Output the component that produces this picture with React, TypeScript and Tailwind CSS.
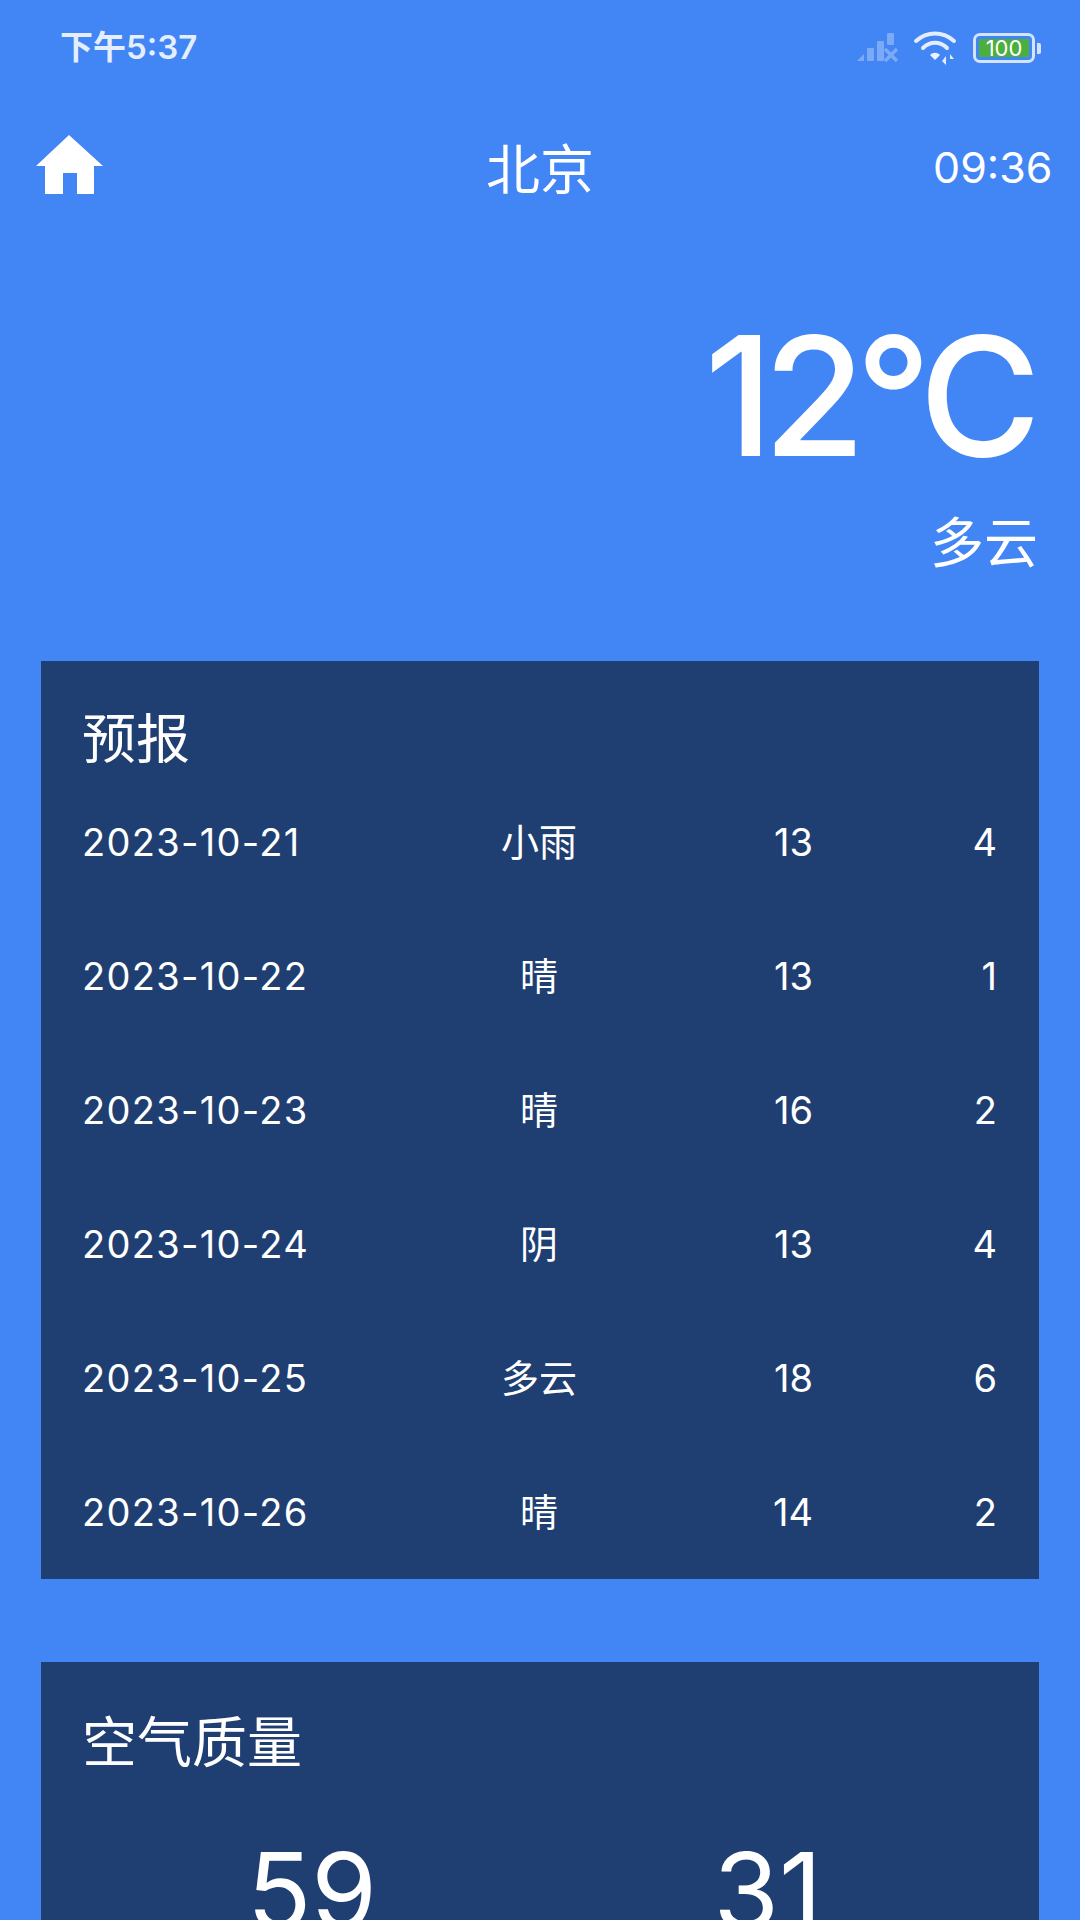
const FONT = "font-['Inter','Noto_Sans_CJK_SC',sans-serif]";

const forecast = [
  { date: "2023-10-21", weather: "小雨", high: 13, low: 4 },
  { date: "2023-10-22", weather: "晴", high: 13, low: 1 },
  { date: "2023-10-23", weather: "晴", high: 16, low: 2 },
  { date: "2023-10-24", weather: "阴", high: 13, low: 4 },
  { date: "2023-10-25", weather: "多云", high: 18, low: 6 },
  { date: "2023-10-26", weather: "晴", high: 14, low: 2 },
];

function HomeIcon() {
  return (
    <svg width="68" height="60" viewBox="0 0 68 60" fill="#fff" className="-mt-[4px]">
      <path d="M34 0 L68 31 H59 V59 H42 V38 H28 V59 H10 V31 H1 Z" />
    </svg>
  );
}

function StatusIcons() {
  return (
    <div className="flex items-center">
      {/* signal, no service */}
      <svg width="44" height="32" viewBox="0 0 44 32" fill="#fff" opacity="0.3">
        <path d="M1 29 L8 22 V29 Z" />
        <rect x="11" y="16" width="7" height="13" rx="1" />
        <rect x="21" y="9" width="7" height="20" rx="1" />
        <rect x="31" y="1" width="7" height="12" rx="1" />
        <path d="M29 17 L41 29 M41 17 L29 29" stroke="#fff" strokeWidth="3.5" />
      </svg>
      {/* wifi */}
      <svg width="46" height="36" viewBox="0 0 46 36" fill="none" className="ml-[13px]">
        <path d="M3 11 C14 1 30 1 41 11" stroke="#fff" strokeOpacity="0.85" strokeWidth="4" strokeLinecap="round" />
        <path d="M10 18 C17 11 27 11 34 18" stroke="#fff" strokeOpacity="0.85" strokeWidth="4" strokeLinecap="round" />
        <path d="M17 25 C20 22 24 22 27 25 L22 30 Z" fill="#fff" fillOpacity="0.9" />
        <path d="M33 26 V35 L29 31 Z M37 24 V34 M37 24 L41 29 H37" fill="#fff" fillOpacity="0.85" />
      </svg>
      {/* battery */}
      <div className="ml-[14px] flex items-center">
        <div className="w-[62px] h-[30px] rounded-[7px] border-[3px] border-[#d3e3fb] flex items-center justify-center p-[3px]">
          <div className="w-full h-full bg-[#4cae3c] flex items-center justify-center text-white text-[22px] leading-none">
            100
          </div>
        </div>
        <div className="ml-[2px] w-[4px] h-[11px] rounded-r-[2px] bg-[#d3e3fb]" />
      </div>
    </div>
  );
}

export default function App() {
  return (
    <div className={`${FONT} w-[1080px] h-[1920px] overflow-hidden bg-[#4285f4] text-white`}>
      <div className="h-[96px] pl-[60px] pr-[39px] flex items-center justify-between">
        <span className="text-[33px] font-semibold text-[#e4eefd]">下午5:37</span>
        <StatusIcons />
      </div>

      <div className="h-[142px] pl-[35px] pr-[29px] flex items-center justify-between">
        <div className="w-[118px]">
          <HomeIcon />
        </div>
        <span className="text-[54px] mt-[6px] mr-[6px]">北京</span>
        <span className="w-[118px] text-right text-[43px]">09:36</span>
      </div>

      <div className="pr-[44px] flex flex-col items-end">
        <div className="mt-[50px] mr-[5px] text-[166px] font-medium tracking-[-10px] leading-[216px]">12°C</div>
        <div className="mt-[4px] mr-[-2px] text-[54px] leading-[72px]">多云</div>
      </div>

      <div className="mx-[41px] mt-[81px] bg-[#1f3f72] pl-[41px] pr-[42px]">
        <h2 className="pt-[44px] text-[54px] font-normal leading-[70px]">预报</h2>
        {forecast.map((day) => (
          <div key={day.date} className="h-[134px] flex items-center text-[38px]">
            <span className="w-[302px] tracking-[1.3px]">{day.date}</span>
            <span className="w-[310px] text-center">{day.weather}</span>
            <span className="w-[119px] text-right">{day.high}</span>
            <span className="flex-1 text-right">{day.low}</span>
          </div>
        ))}
      </div>

      <div className="mx-[41px] mt-[83px] bg-[#1f3f72] pl-[41px] pr-[42px]">
        <h2 className="pt-[44px] text-[55px] font-normal leading-[72px]">空气质量</h2>
        <div className="mt-[48px] flex text-[106px] leading-[130px]">
          <span className="w-[460px] text-center">59</span>
          <span className="w-[280px] text-right">31</span>
        </div>
      </div>
    </div>
  );
}
